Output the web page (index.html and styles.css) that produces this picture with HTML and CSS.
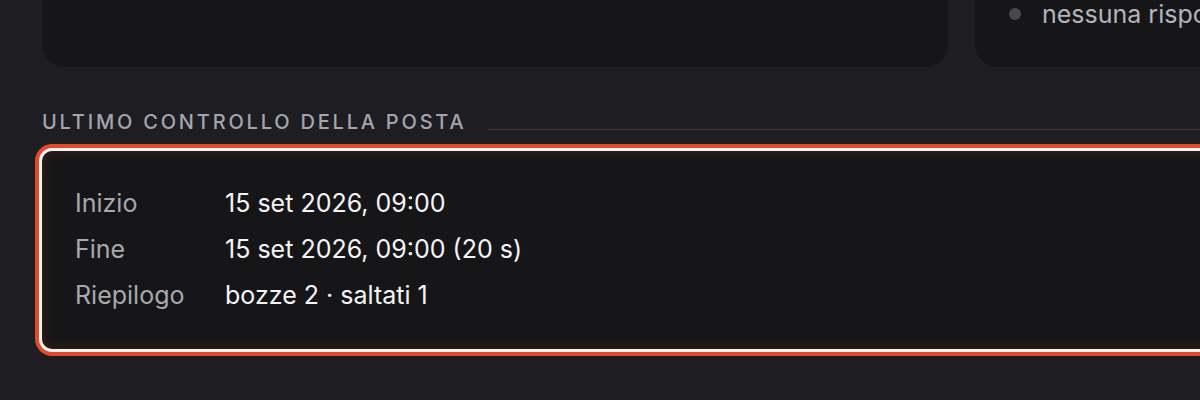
FILE: index.html
```html
<!DOCTYPE html>
<html lang="it">
<head>
    <meta charset="UTF-8">
    <meta name="viewport" content="width=device-width, initial-scale=1.0">
    <title>Controllo posta</title>
    <link rel="stylesheet" href="styles.css">
</head>
<body>
    <div class="page">
        <div class="top-row">
            <div class="panel panel-wide"></div>
            <div class="panel panel-side">
                <ul class="status-list">
                    <li><span class="dot"></span>nessuna risposta in attesa</li>
                </ul>
            </div>
        </div>

        <div class="section-head">
            <h3>Ultimo controllo della posta</h3>
            <div class="rule"></div>
        </div>

        <div class="run-card focused">
            <div class="run-row">
                <span class="run-label">Inizio</span>
                <span class="run-value">15 set 2026, 09:00</span>
            </div>
            <div class="run-row">
                <span class="run-label">Fine</span>
                <span class="run-value">15 set 2026, 09:00 (20 s)</span>
            </div>
            <div class="run-row">
                <span class="run-label">Riepilogo</span>
                <span class="run-value">bozze 2 · saltati 1</span>
            </div>
        </div>
    </div>
</body>
</html>
```

FILE: styles.css
```css
html, body {
    margin: 0;
    height: 100%;
}
body {
    font-family: Inter, "Noto Sans", sans-serif;
    background-color: #1e1d22;
    color: #f2f2f4;
    overflow: hidden;
}
.page {
    width: 1500px;
    padding-left: 42px;
    box-sizing: border-box;
}
.top-row {
    display: flex;
    gap: 27px;
    margin-top: -73px;
}
.panel {
    background-color: #161618;
    border-radius: 22px;
    height: 140px;
}
.panel-wide {
    width: 906px;
}
.panel-side {
    flex: 1;
    padding: 73px 34px 0 34px;
    box-sizing: border-box;
}
.status-list {
    list-style: none;
    margin: 0;
    padding: 0;
}
.status-list li {
    display: flex;
    align-items: center;
    font-size: 25px;
    color: #b4b4bb;
    line-height: 28px;
}
.status-list .dot {
    width: 12px;
    height: 12px;
    border-radius: 50%;
    background-color: #48484e;
    margin-right: 21px;
}
.section-head {
    display: flex;
    align-items: center;
    gap: 22px;
    margin-top: 40px;
    height: 30px;
}
.section-head h3 {
    margin: 0;
    font-size: 20px;
    font-weight: 500;
    letter-spacing: 2.8px;
    text-transform: uppercase;
    color: #a3a5ad;
}
.section-head .rule {
    flex: 1;
    height: 1px;
    background-color: #3b3b41;
    margin-top: 14px;
}
.run-card {
    margin-top: 14px;
    background-color: #161618;
    border-radius: 10px;
    padding: 36px 33px 38px 33px;
    display: flex;
    flex-direction: column;
    gap: 14px;
}
.run-card.focused {
    box-shadow: 0 0 0 3px #f7f3ef, 0 0 0 7px #e24a2c, inset 0 0 14px rgba(226, 74, 44, 0.18);
}
.run-row {
    display: flex;
    font-size: 25px;
    line-height: 32px;
}
.run-label {
    width: 150px;
    color: #a8a8ae;
}
.run-value {
    color: #f4f4f6;
}
```
